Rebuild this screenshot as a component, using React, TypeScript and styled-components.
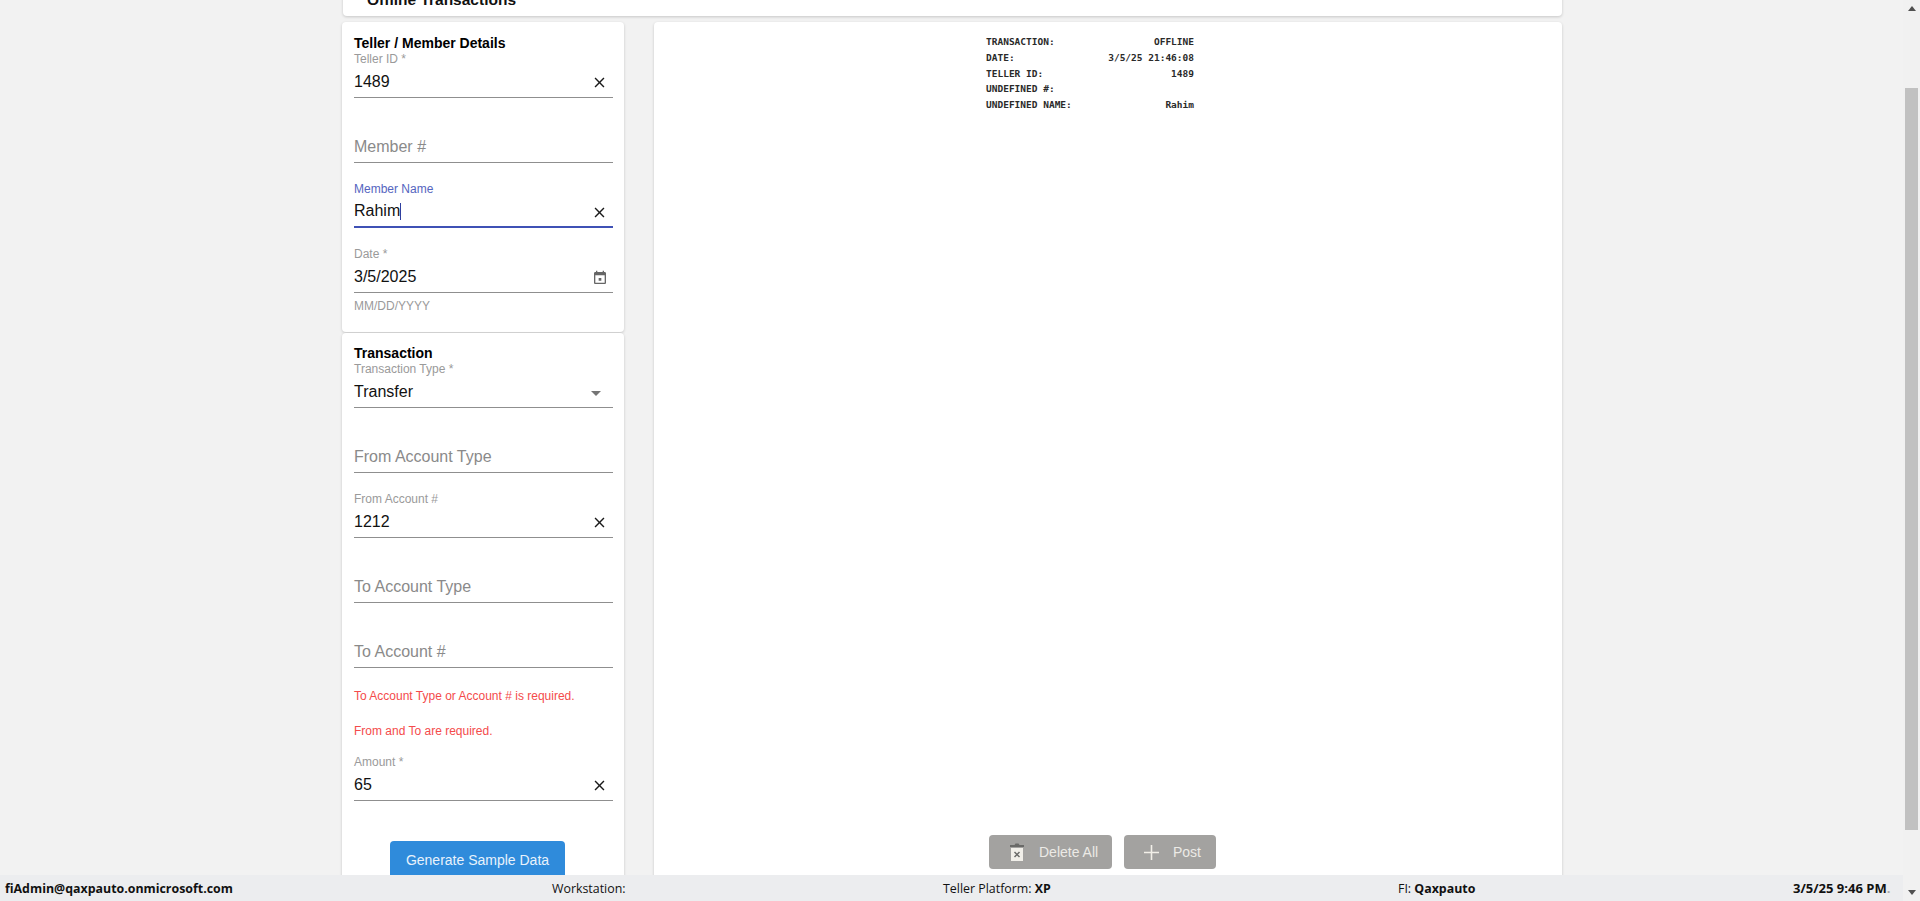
import React from 'react'
import styled, { createGlobalStyle } from 'styled-components'

const GlobalStyle = createGlobalStyle`
  html, body {
    margin: 0;
    height: 100%;
    overflow: hidden;
    background: #f2f2f2;
    font-family: "Liberation Sans", Arial, sans-serif;
  }
`

const Page = styled.div`
  display: flex;
  height: 901px;
  width: 1920px;
  overflow: hidden;
`

const Main = styled.div`
  flex: 1;
  display: flex;
  flex-direction: column;
  min-width: 0;
`

const ScrollArea = styled.div`
  flex: 1;
  min-height: 0;
  overflow: hidden;
  padding: 0 341px 0 342px;
`

const Card = styled.div`
  background: #fff;
  border-radius: 4px;
  box-shadow: 0 1px 3px rgba(0, 0, 0, 0.18);
`

const TitleCard = styled(Card)`
  height: 40px;
  margin-top: -24px;
  margin-left: 1px;
  padding: 0 0 0 24px;
  box-sizing: border-box;
`

const PageTitle = styled.h1`
  margin: 0;
  padding-top: 14px;
  font-size: 15.5px;
  line-height: 19px;
  font-weight: 700;
  color: #111;
`

const Columns = styled.div`
  display: flex;
  align-items: flex-start;
  gap: 30px;
  margin-top: 6px;
`

const LeftColumn = styled.div`
  display: flex;
  flex-direction: column;
  gap: 1px;
  width: 282px;
  flex: none;
`

const FormCard = styled(Card)<{ $top: number; $bottom: number }>`
  padding: ${(p) => p.$top}px 11px ${(p) => p.$bottom}px 12px;
`

const SectionTitle = styled.h2`
  margin: 0;
  font-size: 14px;
  line-height: 18px;
  font-weight: 700;
  color: #000;
`

const FieldStack = styled.div`
  display: flex;
  flex-direction: column;
  gap: 19px;
`

const Field = styled.div``

const FieldLabel = styled.div<{ $focused?: boolean }>`
  height: 14px;
  font-size: 12px;
  line-height: 14px;
  color: ${(p) => (p.$focused ? '#5565c0' : '#9a9a9a')};
`

const FieldRow = styled.div<{ $focused?: boolean }>`
  display: flex;
  align-items: center;
  justify-content: space-between;
  height: ${(p) => (p.$focused ? 30 : 31)}px;
  padding-right: 5px;
  border-bottom: ${(p) => (p.$focused ? '2px solid #3f51b5' : '1px solid #8f8f8f')};
`

const FieldValue = styled.span<{ $placeholder?: boolean }>`
  display: inline-flex;
  align-items: center;
  font-size: 16px;
  line-height: 20px;
  color: ${(p) => (p.$placeholder ? '#8a8a8a' : '#111')};
`

const Caret = styled.span`
  display: inline-block;
  width: 1px;
  height: 17px;
  background: #2f3f9f;
`

const IconSlot = styled.svg<{ $size: number; $color: string }>`
  width: ${(p) => p.$size}px;
  height: ${(p) => p.$size}px;
  margin-top: 2px;
  fill: ${(p) => p.$color};
  flex: none;
`

const HelperText = styled.div`
  margin-top: 6px;
  font-size: 12px;
  line-height: 14px;
  color: #9a9a9a;
`

const ErrorList = styled.div`
  display: flex;
  flex-direction: column;
  gap: 21px;
  margin: 21px 0 17px;
`

const ErrorText = styled.div`
  font-size: 12px;
  line-height: 14px;
  color: #f44b4b;
`

const GenerateButton = styled.button`
  display: block;
  width: 175px;
  height: 38px;
  margin: 40px 0 0 36px;
  padding: 0;
  border: 0;
  border-radius: 4px;
  background: #2f8bdb;
  color: #e8f2fb;
  font-family: inherit;
  font-size: 14px;
`

const PreviewCard = styled(Card)`
  flex: 1;
  min-width: 0;
  height: 858px;
  box-sizing: border-box;
  display: flex;
  flex-direction: column;
  justify-content: space-between;
  padding: 12px 0 11px;
`

const Receipt = styled.div`
  width: 208px;
  margin-left: 332px;
  font-family: "DejaVu Sans Mono", "Liberation Mono", monospace;
  font-size: 9.5px;
  font-weight: 700;
  color: #2a2a2a;
`

const ReceiptRow = styled.div`
  display: flex;
  justify-content: space-between;
  height: 15.75px;
  line-height: 16px;
  white-space: pre;
`

const ActionBar = styled.div`
  display: flex;
  gap: 12px;
  margin-left: 335px;
`

const ActionButton = styled.button<{ $width: number }>`
  display: flex;
  align-items: center;
  gap: 14px;
  width: ${(p) => p.$width}px;
  height: 34px;
  padding: 0 0 0 20px;
  border: 0;
  border-radius: 4px;
  background: #a3a2a0;
  color: #eceae6;
  font-family: inherit;
  font-size: 14px;
`

const Footer = styled.footer`
  display: grid;
  grid-template-columns: 547px 391px 455px 395px auto;
  align-items: center;
  height: 26px;
  padding-left: 5px;
  background: #ecedef;
  color: #111;
  font-family: "Open Sans", "Liberation Sans", sans-serif;
  font-size: 12.4px;
`

const FooterStrong = styled.strong`
  font-weight: 700;
`

const FooterClock = styled.span`
  font-size: 13px;
  font-weight: 700;
  white-space: nowrap;
`

const FaintDot = styled.span`
  color: #a9a9a9;
`

const ScrollBar = styled.div`
  width: 17px;
  flex: none;
  display: flex;
  flex-direction: column;
  align-items: center;
  background: #f1f1f1;
`

const ScrollArrow = styled.div<{ $up?: boolean }>`
  width: 0;
  height: 0;
  margin: 6px 0;
  border-left: 4px solid transparent;
  border-right: 4px solid transparent;
  ${(p) => (p.$up ? 'border-bottom: 5px solid #505050;' : 'border-top: 5px solid #505050;')}
`

const ScrollThumb = styled.div`
  width: 13px;
  height: 742px;
  margin: 71px 0 auto;
  background: #c1c1c1;
`

const CloseIcon = () => (
  <IconSlot viewBox="0 0 24 24" $size={17} $color="#1a1a1a">
    <path d="M19 6.41L17.59 5 12 10.59 6.41 5 5 6.41 10.59 12 5 17.59 6.41 19 12 13.41 17.59 19 19 17.59 13.41 12z" />
  </IconSlot>
)

const CalendarIcon = () => (
  <IconSlot viewBox="0 0 24 24" $size={16} $color="#666">
    <path d="M14 12h-4v4h4v-4zM16 1v2H8V1H6v2H5c-1.11 0-1.99.9-1.99 2L3 19c0 1.1.89 2 2 2h14c1.1 0 2-.9 2-2V5c0-1.1-.9-2-2-2h-1V1h-2zm3 18H5V8h14v11z" />
  </IconSlot>
)

const ArrowIcon = () => (
  <IconSlot viewBox="0 0 24 24" $size={24} $color="#757575">
    <path d="M7 10l5 5 5-5z" />
  </IconSlot>
)

const TrashIcon = () => (
  <svg width="16" height="20" viewBox="0 0 16 20">
    <path d="M1 3h4.500l1-1.500h3L10.500 3H15v2H1z" fill="#6a6a68" />
    <path d="M2 6h12v13H2z" fill="#f1efe9" />
    <path d="M5.500 10l5 5M10.500 10l-5 5" stroke="#6b6b69" strokeWidth="1.500" />
  </svg>
)

const PlusIcon = () => (
  <svg width="15" height="15" viewBox="0 0 15 15">
    <path d="M7.500 0v15M0 7.500h15" stroke="#f2efe8" strokeWidth="1.600" />
  </svg>
)

type FormFieldProps = {
  label?: string
  value?: string
  placeholder?: string
  focused?: boolean
  icon?: React.ReactNode
}

const FormField = ({ label, value, placeholder, focused, icon }: FormFieldProps) => (
  <Field>
    <FieldLabel $focused={focused}>{label}</FieldLabel>
    <FieldRow $focused={focused}>
      <FieldValue $placeholder={!value}>
        {value || placeholder}
        {focused && <Caret />}
      </FieldValue>
      {icon}
    </FieldRow>
  </Field>
)

const receiptRows = [
  ['TRANSACTION:', 'OFFLINE'],
  ['DATE:', '3/5/25 21:46:08'],
  ['TELLER ID:', '1489'],
  ['UNDEFINED #:', ''],
  ['UNDEFINED NAME:', 'Rahim'],
]

export default function App() {
  return (
    <Page>
      <GlobalStyle />
      <Main>
        <ScrollArea>
          <TitleCard>
            <PageTitle>Offline Transactions</PageTitle>
          </TitleCard>
          <Columns>
            <LeftColumn>
              <FormCard $top={12} $bottom={19}>
                <SectionTitle>Teller / Member Details</SectionTitle>
                <FieldStack>
                  <FormField label="Teller ID *" value="1489" icon={<CloseIcon />} />
                  <FormField placeholder="Member #" />
                  <FormField label="Member Name" value="Rahim" focused icon={<CloseIcon />} />
                  <Field>
                    <FormField label="Date *" value="3/5/2025" icon={<CalendarIcon />} />
                    <HelperText>MM/DD/YYYY</HelperText>
                  </Field>
                </FieldStack>
              </FormCard>
              <FormCard $top={11} $bottom={20}>
                <SectionTitle>Transaction</SectionTitle>
                <FieldStack>
                  <FormField label="Transaction Type *" value="Transfer" icon={<ArrowIcon />} />
                  <FormField placeholder="From Account Type" />
                  <FormField label="From Account #" value="1212" icon={<CloseIcon />} />
                  <FormField placeholder="To Account Type" />
                  <FormField placeholder="To Account #" />
                </FieldStack>
                <ErrorList>
                  <ErrorText>To Account Type or Account # is required.</ErrorText>
                  <ErrorText>From and To are required.</ErrorText>
                </ErrorList>
                <FormField label="Amount *" value="65" icon={<CloseIcon />} />
                <GenerateButton>Generate Sample Data</GenerateButton>
              </FormCard>
            </LeftColumn>
            <PreviewCard>
              <Receipt>
                {receiptRows.map(([name, val]) => (
                  <ReceiptRow key={name}>
                    <span>{name}</span>
                    <span>{val}</span>
                  </ReceiptRow>
                ))}
              </Receipt>
              <ActionBar>
                <ActionButton $width={123}>
                  <TrashIcon />
                  Delete All
                </ActionButton>
                <ActionButton $width={92}>
                  <PlusIcon />
                  Post
                </ActionButton>
              </ActionBar>
            </PreviewCard>
          </Columns>
        </ScrollArea>
        <Footer>
          <FooterStrong>fiAdmin@qaxpauto.onmicrosoft.com</FooterStrong>
          <span>Workstation:</span>
          <span>
            Teller Platform: <FooterStrong>XP</FooterStrong>
          </span>
          <span>
            FI: <FooterStrong>Qaxpauto</FooterStrong>
          </span>
          <FooterClock>
            3/5/25 9:46 PM<FaintDot>.</FaintDot>
          </FooterClock>
        </Footer>
      </Main>
      <ScrollBar>
        <ScrollArrow $up />
        <ScrollThumb />
        <ScrollArrow />
      </ScrollBar>
    </Page>
  )
}
